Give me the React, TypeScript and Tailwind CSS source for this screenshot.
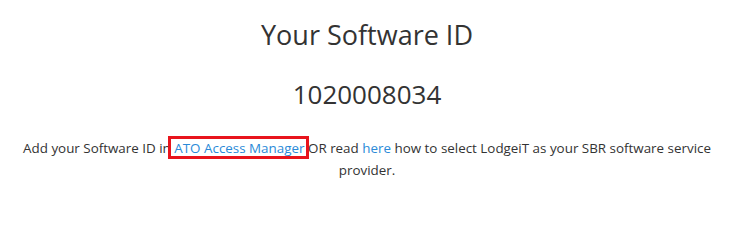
import React from 'react';

const App: React.FC = () => {
  return (
    <div className="min-h-screen bg-white text-[#333] px-[15px]" style={{ fontFamily: '"Open Sans", sans-serif' }}>
      <div className="flex flex-col items-center text-center">
        <h1 className="mt-[15px] text-[27px] leading-[40px] font-normal">Your Software ID</h1>
        <div className="mt-[22px] text-[26px] leading-[34px]">1020008034</div>
        <p className="mt-[26px] text-[13.4px] leading-[22px]">
          Add your Software ID in{' '}
          <a href="#" className="relative text-[#2a8ad8]">
            ATO Access Manager
            <span className="pointer-events-none absolute -left-[6px] -right-[5px] -top-[3px] -bottom-[2px] border-[3px] border-[#e8141c]" />
          </a>{' '}
          OR read <a href="#" className="text-[#2a8ad8]">here</a> how to select LodgeiT as your SBR software service provider.
        </p>
      </div>
    </div>
  );
};

export default App;
